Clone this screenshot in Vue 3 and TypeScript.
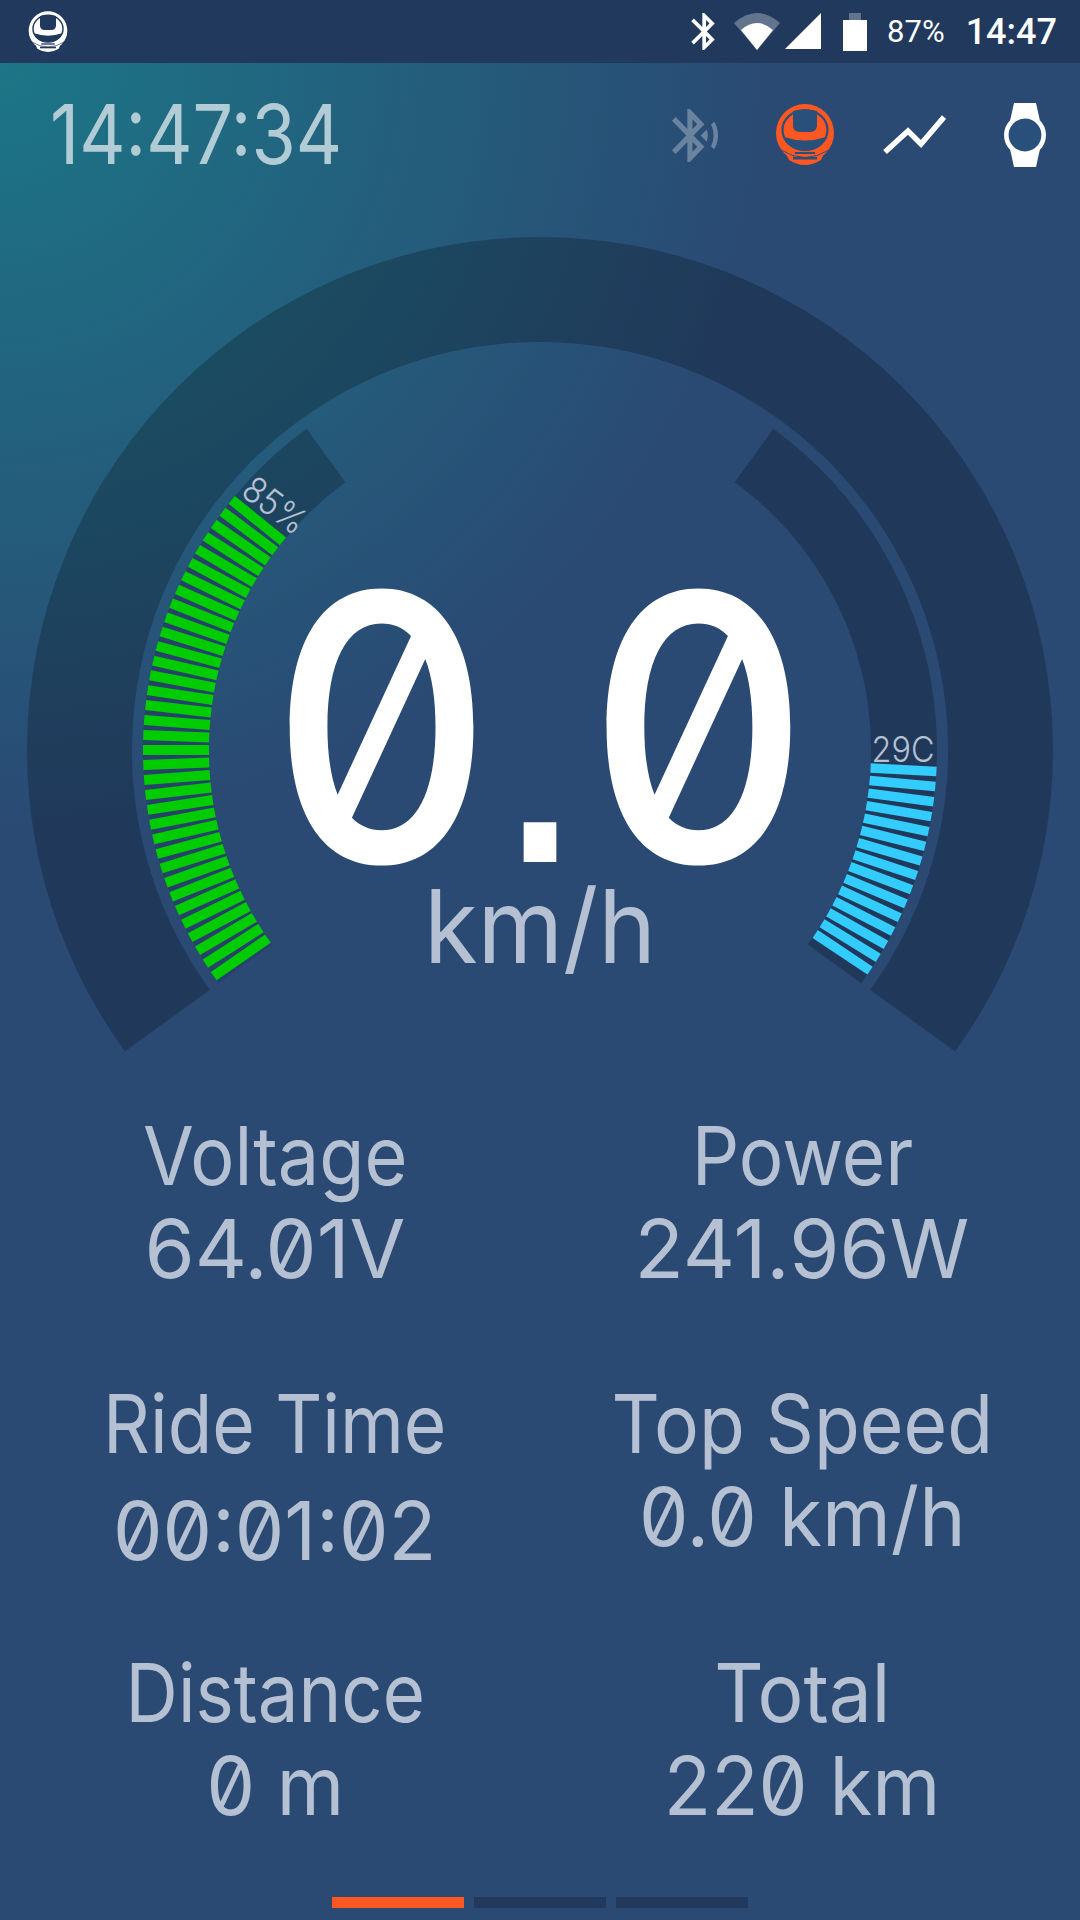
<script setup lang="ts">
const CX = 540
const CY = 750

function pt(r: number, deg: number) {
  const a = (deg * Math.PI) / 180
  return `${(CX + r * Math.cos(a)).toFixed(2)} ${(CY + r * Math.sin(a)).toFixed(2)}`
}

// angles are svg angles: 0 = right, 90 = down
function sector(r0: number, r1: number, from: number, to: number) {
  const large = Math.abs(to - from) > 180 ? 1 : 0
  return `M${pt(r1, from)} A${r1} ${r1} 0 ${large} 1 ${pt(r1, to)} L${pt(r0, to)} A${r0} ${r0} 0 ${large} 0 ${pt(r0, from)} Z`
}

function bar(deg: number) {
  return `M${pt(331, deg)} L${pt(397, deg)}`
}

const ringPath = sector(408, 513, 144, 396)
const leftBand = sector(331, 397, 219, 234)
const leftUnder = sector(331, 397, 144, 219.5)
const rightBand = sector(331, 397, 306, 396)

const STEP = 2.17
const greenBars: string[] = []
for (let k = -16; k <= 18; k++) {
  greenBars.push(bar(180 + k * STEP))
}

const blueBars: string[] = []
for (let i = 0; i < 15; i++) {
  blueBars.push(bar(3.1 + i * 2.19))
}

const stats = [
  { label: 'Voltage', value: '64.01V', ls: 0.91, vs: 1.0 },
  { label: 'Power', value: '241.96W', ls: 0.92, vs: 1.0 },
  { label: 'Ride Time', value: '00:01:02', ls: 0.9, vs: 0.97, low: true },
  { label: 'Top Speed', value: '0.0 km/h', ls: 0.925, vs: 0.97 },
  { label: 'Distance', value: '0 m', ls: 0.895, vs: 0.95 },
  { label: 'Total', value: '220 km', ls: 0.945, vs: 0.96 },
]
</script>

<template>
  <div class="screen">
    <svg class="defs" width="0" height="0">
      <symbol id="wheel" viewBox="0 0 60 62">
        <circle cx="30" cy="29" r="29" fill="currentColor" />
        <path d="M10 47 Q30 66 50 47 L46 56 Q30 66 14 56 Z" fill="currentColor" />
        <ellipse cx="30" cy="26" rx="22.5" ry="20" fill="none" stroke="var(--cut)" stroke-width="2.2" />
        <path d="M18 7 L18 21 Q18 28 25 28 L35 28 Q42 28 42 21 L42 7 Q30 4 18 7 Z" fill="var(--cut)" />
        <path d="M9 33 Q30 40 51 33 Q46 46 30 46 Q14 46 9 33 Z" fill="var(--cut)" />
        <path d="M6 46 Q30 61 54 46" fill="none" stroke="var(--cut)" stroke-width="1" />
        <rect x="20" y="48" width="20" height="2" fill="var(--cut)" />
        <rect x="18" y="53" width="24" height="2.5" fill="var(--cut)" />
      </symbol>
    </svg>

    <div class="status-bar">
      <svg class="status-logo" width="40" height="42"><use href="#wheel" /></svg>
      <div class="status-right">
        <svg width="24" height="37" viewBox="5 2 12.71 20" fill="#fff">
          <path d="M17.71 7.71L12 2h-1v7.59L6.41 5 5 6.41 10.59 12 5 17.59 6.41 19 11 14.41V22h1l5.71-5.71-4.3-4.29 4.3-4.29zM13 5.83l1.88 1.88L13 9.59V5.83zm1.88 10.46L13 18.17v-3.76l1.88 1.88z" />
        </svg>
        <svg class="gap-19" width="46" height="37" viewBox="736 13 46 37">
          <path d="M759 50 L736 23 Q759 3 782 23 Z" fill="#fff" opacity="0.3" />
          <path d="M759 50 L743 30 Q759 16 775 30 Z" fill="#fff" />
        </svg>
        <svg class="gap-5" width="36" height="37" viewBox="787 13 36 37">
          <path d="M787 49 L823 13 L823 49 Z" fill="#fff" />
        </svg>
        <svg class="gap-22" width="24" height="38" viewBox="845 12 24 38">
          <path d="M851 12 H863 V19 H869 V25 H845 V19 H851 Z" fill="#fff" opacity="0.3" />
          <rect x="845" y="19" width="24" height="31" fill="#fff" />
        </svg>
        <span class="status-pct">87%</span>
        <span class="status-time">14:47</span>
      </div>
    </div>

    <div class="header">
      <span class="clock">14:47:34</span>
      <div class="header-icons">
        <svg width="46" height="53" viewBox="3 2 18 20" preserveAspectRatio="none" fill="#fff" opacity="0.3">
          <path d="M14.24 12.01l2.32 2.32c.28-.72.44-1.51.44-2.33 0-.82-.16-1.59-.43-2.31l-2.33 2.32zm5.29-5.3l-1.26 1.26c.63 1.21.98 2.57.98 4.02s-.36 2.82-.98 4.02l1.2 1.2c.97-1.54 1.54-3.36 1.54-5.31-.01-1.89-.55-3.67-1.48-5.19zm-3.82 1L10 2H9v7.59L4.41 5 3 6.41 8.59 12 3 17.59 4.41 19 9 14.41V22h1l5.71-5.71L11.41 12l4.3-4.29zM11 5.83l1.88 1.88L11 9.59V5.83zm1.88 10.46L11 18.17v-3.76l1.88 1.88z" />
        </svg>
        <svg class="head-logo" width="60" height="62"><use href="#wheel" /></svg>
        <svg class="head-trend" width="63" height="40" viewBox="883 116 63 40">
          <polyline points="885,153 908,132 921,145 944,118" fill="none" stroke="#fff" stroke-width="5.5" />
        </svg>
        <svg class="head-watch" width="42" height="64" viewBox="1004 104 42 64">
          <path d="M1014 104 H1036 L1040 122 H1010 Z M1010 150 H1040 L1036 168 H1014 Z" fill="#fff" />
          <circle cx="1025" cy="136" r="18.7" fill="#29507a" stroke="#fff" stroke-width="4.6" />
        </svg>
      </div>
    </div>

    <div class="gauge">
      <svg class="gauge-svg" width="1080" height="937" viewBox="0 173 1080 937">
        <path :d="ringPath" class="band" />
        <path :d="leftBand" class="band" />
        <path :d="leftUnder" fill="#28416a" />
        <path :d="rightBand" class="band" />
        <path v-for="(d, i) in greenBars" :key="'g' + i" :d="d" class="bar-green" />
        <path v-for="(d, i) in blueBars" :key="'b' + i" :d="d" class="bar-blue" />
        <text class="gauge-label" transform="translate(275 505) rotate(37) scale(0.9 1)" text-anchor="middle" y="13">85%</text>
        <text class="gauge-label" transform="translate(903 762) scale(0.9 1)" text-anchor="middle">29C</text>
      </svg>
      <div class="speed">0<span class="speed-dot">.</span>0</div>
      <div class="unit">km/h</div>
    </div>

    <div class="stats">
      <div v-for="s in stats" :key="s.label" class="stat">
        <span class="line" :style="{ transform: `scaleX(${s.ls})` }">{{ s.label }}</span>
        <span class="line" :class="{ low: s.low }" :style="{ transform: `scaleX(${s.vs})` }">{{ s.value }}</span>
      </div>
    </div>

    <div class="pager">
      <i class="dot active"></i>
      <i class="dot"></i>
      <i class="dot"></i>
    </div>
  </div>
</template>

<style scoped>
.screen {
  width: 1080px;
  height: 1920px;
  overflow: hidden;
  display: flex;
  flex-direction: column;
  background: radial-gradient(circle 760px at 0 63px, #1c7686 0%, #2a4a74 100%);
  font-family: Inter, "Noto Sans", sans-serif;
  font-variant-numeric: slashed-zero;
  font-feature-settings: "zero" 1;
}

.defs {
  position: absolute;
}

.status-bar {
  height: 63px;
  flex: none;
  display: flex;
  align-items: center;
  justify-content: space-between;
  padding: 0 23px 0 28px;
  background: #20395c;
  color: #fff;
  --cut: #20395c;
}

.status-logo {
  display: block;
}

.status-right {
  display: flex;
  align-items: center;
  font-family: Roboto, sans-serif;
}

.gap-19 {
  margin-left: 19px;
}

.gap-5 {
  margin-left: 5px;
}

.gap-22 {
  margin-left: 22px;
}

.status-pct {
  margin-left: 20px;
  font-size: 31px;
}

.status-time {
  margin-left: 21px;
  font-size: 36px;
  font-weight: 500;
}

.header {
  height: 110px;
  flex: none;
  box-sizing: border-box;
  padding: 34px 34px 0 50px;
  display: flex;
  align-items: center;
  justify-content: space-between;
}

.clock {
  font-size: 82px;
  line-height: 1;
  font-weight: 400;
  color: #b2ccd6;
  white-space: nowrap;
  transform: scaleX(0.875);
  transform-origin: left center;
}

.header-icons {
  display: flex;
  align-items: center;
  color: #ff5722;
  --cut: #29507a;
}

.head-logo {
  margin-left: 57px;
}

.head-trend {
  margin-left: 48px;
}

.head-watch {
  margin-left: 58px;
}

.gauge {
  position: relative;
  height: 937px;
  flex: none;
}

.gauge-svg {
  display: block;
}

.band {
  fill: #000;
  opacity: 0.22;
}

.bar-green {
  stroke: #00cc00;
  stroke-width: 10;
}

.bar-blue {
  stroke: #33ccff;
  stroke-width: 9.5;
}

.gauge-label {
  font-family: Inter, sans-serif;
  font-size: 36px;
  font-weight: 300;
  fill: #b5c1d2;
}

.speed {
  position: absolute;
  left: 0;
  right: 0;
  top: 404px;
  text-align: center;
  font-size: 371px;
  line-height: 300px;
  font-weight: 500;
  color: #fff;
  transform: scaleX(0.925);
}

.speed-dot {
  font-family: "Liberation Sans", sans-serif;
}

.unit {
  position: absolute;
  left: 0;
  right: 0;
  top: 713px;
  text-align: center;
  font-size: 102px;
  line-height: 80px;
  font-weight: 400;
  color: #b5c1d2;
  transform: scaleX(0.958);
}

.stats {
  display: grid;
  grid-template-columns: 550px 504px;
  grid-template-rows: 268px 269px 186px;
  flex: none;
}

.stat {
  display: flex;
  flex-direction: column;
  align-items: center;
}

.line {
  display: block;
  font-size: 81px;
  line-height: 93px;
  font-weight: 400;
  color: #b5c1d2;
  white-space: nowrap;
}

.low {
  margin-top: 14px;
}

.pager {
  margin-top: 64px;
  display: flex;
  justify-content: center;
  gap: 10px;
}

.dot {
  display: block;
  width: 132px;
  height: 11px;
  background: #20395c;
}

.dot.active {
  background: #ff5722;
}
</style>
